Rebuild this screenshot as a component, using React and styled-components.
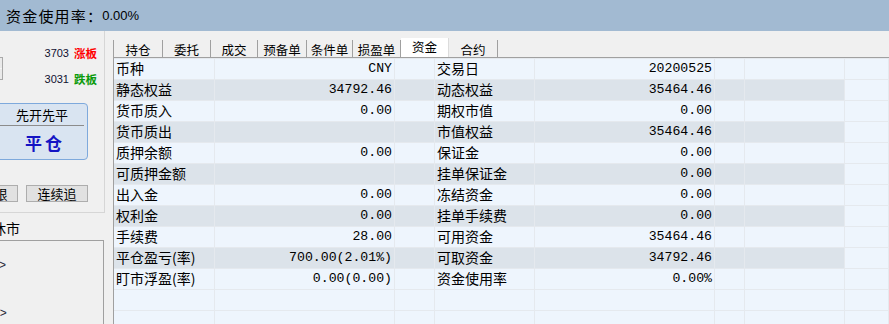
import React from "react";
import styled, { createGlobalStyle } from "styled-components";

const GlobalStyle = createGlobalStyle`
  html, body { margin: 0; padding: 0; background: #f0f0f0; overflow: hidden; }
  body { font-family: "Noto Sans CJK SC", "Liberation Sans", sans-serif; color: #000; }
`;

const CJK = `"Noto Sans CJK SC", "Noto Sans", sans-serif`;
const MONO = `"Liberation Mono", "Noto Sans CJK SC", monospace`;

const Page = styled.div`
  width: 889px;
  height: 324px;
  display: flex;
  flex-direction: column;
  overflow: hidden;
  background: #f0f0f0;
`;

const TopBar = styled.div`
  height: 31px;
  flex: none;
  background: #a2bad2;
  display: flex;
  align-items: center;
  padding-left: 6px;
  box-sizing: border-box;
`;

const TopLabel = styled.span`
  font-family: ${CJK};
  font-size: 15px;
  letter-spacing: 1.2px;
  line-height: 20px;
`;

const TopValue = styled.span`
  font-family: "Liberation Sans", sans-serif;
  font-size: 13px;
  line-height: 20px;
  margin-left: -1px;
`;

const Main = styled.div`
  flex: 1;
  display: flex;
  min-height: 0;
`;

const LeftCol = styled.div`
  width: 105px;
  flex: none;
  display: flex;
  flex-direction: column;
`;

const ControlPanel = styled.div`
  height: 182px;
  box-sizing: border-box;
  border-right: 1px solid #d6d6d6;
  border-bottom: 1px solid #d6d6d6;
  display: flex;
  flex-direction: column;
`;

const QuoteBlock = styled.div`
  display: flex;
  align-items: flex-start;
  margin-top: 15px;
`;

const Spinner = styled.div`
  margin-left: -20px;
  margin-top: 11px;
  width: 23px;
  height: 23px;
  box-sizing: border-box;
  border: 1px solid #a9a9a9;
  background: linear-gradient(#f6f6f6, #f6f6f6) center / 100% 1px no-repeat, #eaeaea;
`;

const QuoteLines = styled.div`
  margin-left: auto;
  padding-right: 7px;
  display: flex;
  flex-direction: column;
  gap: 12px;
`;

const QuoteLine = styled.div`
  display: flex;
  align-items: center;
  height: 14px;
  gap: 5px;
`;

const QuoteNum = styled.span`
  font-family: "Liberation Sans", sans-serif;
  font-size: 11px;
  color: #101030;
`;

const QuoteTag = styled.span`
  font-family: ${CJK};
  font-size: 11.5px;
  font-weight: 700;
  color: ${(p) => p.$color};
`;

const ActionButton = styled.div`
  margin-top: 17px;
  margin-left: -4px;
  width: 92px;
  height: 57px;
  box-sizing: border-box;
  border: 1px solid #7ea9dc;
  border-radius: 4px;
  background: #d9e4f1;
  display: flex;
  flex-direction: column;
`;

const ActionTitle = styled.div`
  height: 21px;
  margin-right: 3px;
  border-bottom: 1px solid #8c8c8c;
  font-family: ${CJK};
  font-size: 13px;
  line-height: 21px;
  text-align: center;
  padding-left: 3px;
`;

const ActionMain = styled.div`
  flex: 1;
  display: flex;
  align-items: center;
  justify-content: center;
  font-family: ${CJK};
  font-size: 17px;
  font-weight: 700;
  letter-spacing: 3px;
  color: #1414c4;
  padding-left: 6px;
`;

const ButtonRow = styled.div`
  margin-top: 25px;
  display: flex;
  gap: 8px;
`;

const SmallButton = styled.div`
  width: ${(p) => p.$w}px;
  margin-left: ${(p) => p.$ml || 0}px;
  height: 17px;
  box-sizing: border-box;
  border: 1px solid #adadad;
  background: #e1e1e1;
  font-family: ${CJK};
  font-size: 13px;
  line-height: 15px;
  text-align: center;
`;

const StatusText = styled.div`
  margin-top: 5px;
  margin-left: -8px;
  height: 20px;
  font-family: ${CJK};
  font-size: 14px;
  line-height: 20px;
`;

const ListBox = styled.div`
  margin-top: 2px;
  margin-left: -2px;
  width: 106px;
  flex: 1;
  box-sizing: border-box;
  border: 1px solid #a0a0a0;
  border-bottom: none;
  display: flex;
  flex-direction: column;
  padding-top: 18px;
  gap: 36px;
`;

const ListLine = styled.div`
  height: 12px;
  margin-left: ${(p) => p.$ml}px;
  font-family: "Liberation Sans", sans-serif;
  font-size: 12px;
  line-height: 12px;
  color: #2a2a3a;
`;

const RightCol = styled.div`
  flex: 1;
  margin-left: 8px;
  padding-top: 9px;
  display: flex;
  flex-direction: column;
  min-width: 0;
`;

const TabBar = styled.div`
  height: 17px;
  flex: none;
  display: flex;
  align-items: flex-end;
  border-left: 1px solid #a0a0a0;
`;

const Tab = styled.div`
  width: ${(p) => p.$w}px;
  height: ${(p) => (p.$active ? 19 : 17)}px;
  box-sizing: border-box;
  border-right: 1px solid ${(p) => (p.$active ? "#dcdcdc" : "#a0a0a0")};
  background: ${(p) => (p.$active ? "#ffffff" : "transparent")};
  font-family: ${CJK};
  font-size: 12.5px;
  line-height: ${(p) => (p.$active ? 18 : 20)}px;
  text-align: center;
  overflow: hidden;
`;

const Table = styled.div`
  flex: 1;
  border-top: 1px solid #a0a0a0;
  border-left: 1px solid #a0a0a0;
  display: grid;
  grid-template-columns: 101px 180px 40px 100px 180px 30px 100px 1fr;
  grid-auto-rows: 21px;
  align-content: start;
  overflow: hidden;
`;

const Cell = styled.div`
  box-sizing: border-box;
  border-top: 1px solid #e5e9ee;
  border-right: 1px solid #e5e9ee;
  background: ${(p) => (p.$alt ? "#dce3ea" : "#eef5fd")};
  line-height: 19px;
  white-space: nowrap;
  overflow: hidden;
`;

const LabelCell = styled(Cell)`
  font-family: ${CJK};
  font-size: 14px;
  padding-left: 2px;
`;

const ValueCell = styled(Cell)`
  font-family: ${MONO};
  font-size: 13.2px;
  text-align: right;
  padding-right: 2px;
  line-height: 20px;
`;

const rows = [
  ["币种", "CNY", "交易日", "20200525"],
  ["静态权益", "34792.46", "动态权益", "35464.46"],
  ["货币质入", "0.00", "期权市值", "0.00"],
  ["货币质出", "", "市值权益", "35464.46"],
  ["质押余额", "0.00", "保证金", "0.00"],
  ["可质押金额", "", "挂单保证金", "0.00"],
  ["出入金", "0.00", "冻结资金", "0.00"],
  ["权利金", "0.00", "挂单手续费", "0.00"],
  ["手续费", "28.00", "可用资金", "35464.46"],
  ["平仓盈亏(率)", "700.00(2.01%)", "可取资金", "34792.46"],
  ["盯市浮盈(率)", "0.00(0.00)", "资金使用率", "0.00%"],
  ["", "", "", ""],
  ["", "", "", ""],
];

const tabs = [
  ["持仓", 49],
  ["委托", 48],
  ["成交", 47],
  ["预备单", 49],
  ["条件单", 46],
  ["损盈单", 48],
  ["资金", 48],
  ["合约", 49],
];

export default function App() {
  return (
    <>
      <GlobalStyle />
      <Page>
        <TopBar>
          <TopLabel>资金使用率：</TopLabel>
          <TopValue>0.00%</TopValue>
        </TopBar>
        <Main>
          <LeftCol>
            <ControlPanel>
              <QuoteBlock>
                <Spinner />
                <QuoteLines>
                  <QuoteLine>
                    <QuoteNum>3703</QuoteNum>
                    <QuoteTag $color="#ff0000">涨板</QuoteTag>
                  </QuoteLine>
                  <QuoteLine>
                    <QuoteNum>3031</QuoteNum>
                    <QuoteTag $color="#0a9a0a">跌板</QuoteTag>
                  </QuoteLine>
                </QuoteLines>
              </QuoteBlock>
              <ActionButton>
                <ActionTitle>先开先平</ActionTitle>
                <ActionMain>平仓</ActionMain>
              </ActionButton>
              <ButtonRow>
                <SmallButton $w={34} $ml={-16}>限</SmallButton>
                <SmallButton $w={62}>连续追</SmallButton>
              </ButtonRow>
            </ControlPanel>
            <StatusText>休市</StatusText>
            <ListBox>
              <ListLine $ml={0}>&gt;</ListLine>
              <ListLine $ml={-6}>5&gt;</ListLine>
            </ListBox>
          </LeftCol>
          <RightCol>
            <TabBar>
              {tabs.map(([t, w]) => (
                <Tab key={t} $w={w} $active={t === "资金"}>
                  {t}
                </Tab>
              ))}
            </TabBar>
            <Table>
              {rows.map((r, i) => {
                const alt = i % 2 === 1 && i < 11;
                return (
                  <React.Fragment key={i}>
                    <LabelCell $alt={alt}>{r[0]}</LabelCell>
                    <ValueCell $alt={alt}>{r[1]}</ValueCell>
                    <Cell $alt={alt} />
                    <LabelCell $alt={alt}>{r[2]}</LabelCell>
                    <ValueCell $alt={alt}>{r[3]}</ValueCell>
                    <Cell $alt={alt} />
                    <Cell $alt={alt} />
                    <Cell />
                  </React.Fragment>
                );
              })}
            </Table>
          </RightCol>
        </Main>
      </Page>
    </>
  );
}
